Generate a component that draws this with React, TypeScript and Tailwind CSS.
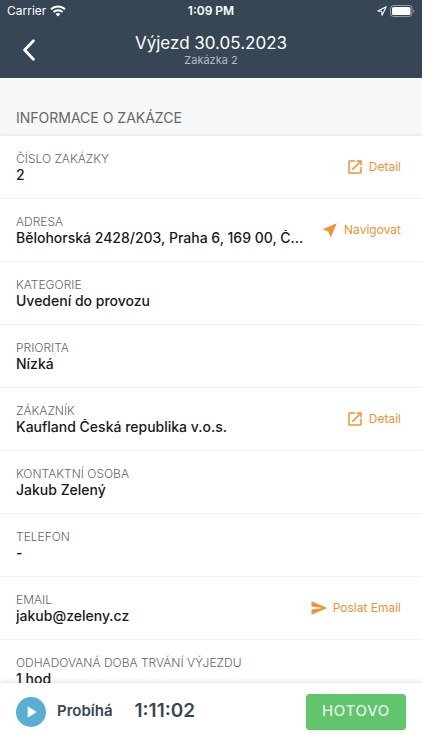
import React from 'react';
import { MdNearMe, MdOpenInNew, MdPlayArrow, MdSend } from 'react-icons/md';

type ActionType = 'detail' | 'navigate' | 'email';

interface Field {
  label: string;
  value: string;
  action?: ActionType;
}

const fields: Field[] = [
  { label: 'Číslo zakázky', value: '2', action: 'detail' },
  { label: 'Adresa', value: 'Bělohorská 2428/203, Praha 6, 169 00, Česká republika', action: 'navigate' },
  { label: 'Kategorie', value: 'Uvedení do provozu' },
  { label: 'Priorita', value: 'Nízká' },
  { label: 'Zákazník', value: 'Kaufland Česká republika v.o.s.', action: 'detail' },
  { label: 'Kontaktní osoba', value: 'Jakub Zelený' },
  { label: 'Telefon', value: '-' },
  { label: 'Email', value: 'jakub@zeleny.cz', action: 'email' },
  { label: 'Odhadovaná doba trvání výjezdu', value: '1 hod' },
];

const actions = {
  detail: { text: 'Detail', Icon: MdOpenInNew },
  navigate: { text: 'Navigovat', Icon: MdNearMe },
  email: { text: 'Poslat Email', Icon: MdSend },
};

const StatusBar: React.FC = () => (
  <div className="grid grid-cols-3 items-center h-[22px] px-[7px] text-xs">
    <div className="flex items-center gap-1">
      <span>Carrier</span>
      <svg className="w-4 h-3" viewBox="0 0 16 12" fill="none" stroke="currentColor" strokeWidth="2">
        <path d="M1 4.3a10 10 0 0 1 14 0" />
        <path d="M3.5 7a6.4 6.4 0 0 1 9 0" />
        <path d="M8 11.6 5.6 9.1a3.4 3.4 0 0 1 4.8 0z" fill="currentColor" stroke="none" />
      </svg>
    </div>
    <span className="text-center font-semibold">1:09 PM</span>
    <div className="flex items-center justify-end gap-[3px]">
      <svg className="w-[10px] h-[10px]" viewBox="0 0 10 10" fill="none" stroke="currentColor" strokeWidth="1.1" strokeLinejoin="round">
        <path d="M9.2.8.9 4.9l3.8.4.4 3.9z" />
      </svg>
      <svg className="w-[25px] h-3" viewBox="0 0 25 12" fill="none">
        <rect x=".5" y=".5" width="21.5" height="11" rx="3" stroke="#fff" strokeOpacity=".45" />
        <rect x="2" y="2" width="18.5" height="8" rx="1.6" fill="#fff" />
        <path d="M23.3 4.2c1.4.6 1.4 3 0 3.6z" fill="#fff" fillOpacity=".5" />
      </svg>
    </div>
  </div>
);

const ActionButton: React.FC<{ type: ActionType }> = ({ type }) => {
  const { text, Icon } = actions[type];
  return (
    <button type="button" className="flex items-center gap-[5px] shrink-0 pr-[5px] text-xs text-[#ee9434]">
      <Icon className="w-[18px] h-[18px]" />
      <span>{text}</span>
    </button>
  );
};

const FieldRow: React.FC<{ field: Field }> = ({ field }) => (
  <div className="flex items-center h-[63px] gap-3 px-4 border-b border-[#f1f1f1]">
    <dl className="flex-1 min-w-0">
      <dt className="text-xs leading-4 font-light uppercase text-[#666]">{field.label}</dt>
      <dd className="text-sm leading-4 font-medium truncate text-[#1a1a1a]">{field.value}</dd>
    </dl>
    {field.action && <ActionButton type={field.action} />}
  </div>
);

export default function App() {
  return (
    <div className="flex flex-col h-screen overflow-hidden bg-[#f6f8fa] font-['Inter','Liberation_Sans',sans-serif]">
      <header className="shrink-0 bg-[#364654] text-white">
        <StatusBar />
        <div className="flex items-center h-14 px-4">
          <button type="button" aria-label="Zpět" className="w-8 h-8 flex items-center pl-[7px]">
            <svg className="w-3 h-[22px]" viewBox="0 0 12 22" fill="none" stroke="currentColor" strokeWidth="2.8" strokeLinecap="round" strokeLinejoin="round">
              <path d="M10.4 1.8 1.6 11l8.8 9.2" />
            </svg>
          </button>
          <div className="flex-1 text-center">
            <h1 className="text-[17px] leading-5">Výjezd 30.05.2023</h1>
            <p className="text-[11px] leading-[14px] text-[#b4bac0]">Zakázka 2</p>
          </div>
          <div className="w-8" />
        </div>
      </header>

      <main className="flex-1 min-h-0 overflow-hidden">
        <h2 className="pt-[30px] pb-[8px] px-4 text-sm uppercase text-[#666]">Informace o zakázce</h2>
        <section className="bg-white shadow-[0_0_4px_rgba(0,0,0,0.12)]">
          {fields.map((field) => (
            <FieldRow key={field.label} field={field} />
          ))}
        </section>
      </main>

      <footer className="relative shrink-0 flex items-center h-[67px] px-4 pb-[10px] bg-white text-[#364654] shadow-[0_0_6px_rgba(0,0,0,0.18)]">
        <button type="button" aria-label="Spustit" className="flex items-center justify-center w-[30px] h-[30px] rounded-full bg-[#58aed3] text-white">
          <MdPlayArrow className="w-5 h-5" />
        </button>
        <span className="ml-[11px] text-[15px] font-semibold">Probíhá</span>
        <span className="ml-[22px] text-[19px] font-semibold">1:11:02</span>
        <button type="button" className="ml-auto h-9 w-[100px] rounded bg-[#60c56c] text-[15px] tracking-wider text-white shadow-sm">
          HOTOVO
        </button>
      </footer>
    </div>
  );
}
